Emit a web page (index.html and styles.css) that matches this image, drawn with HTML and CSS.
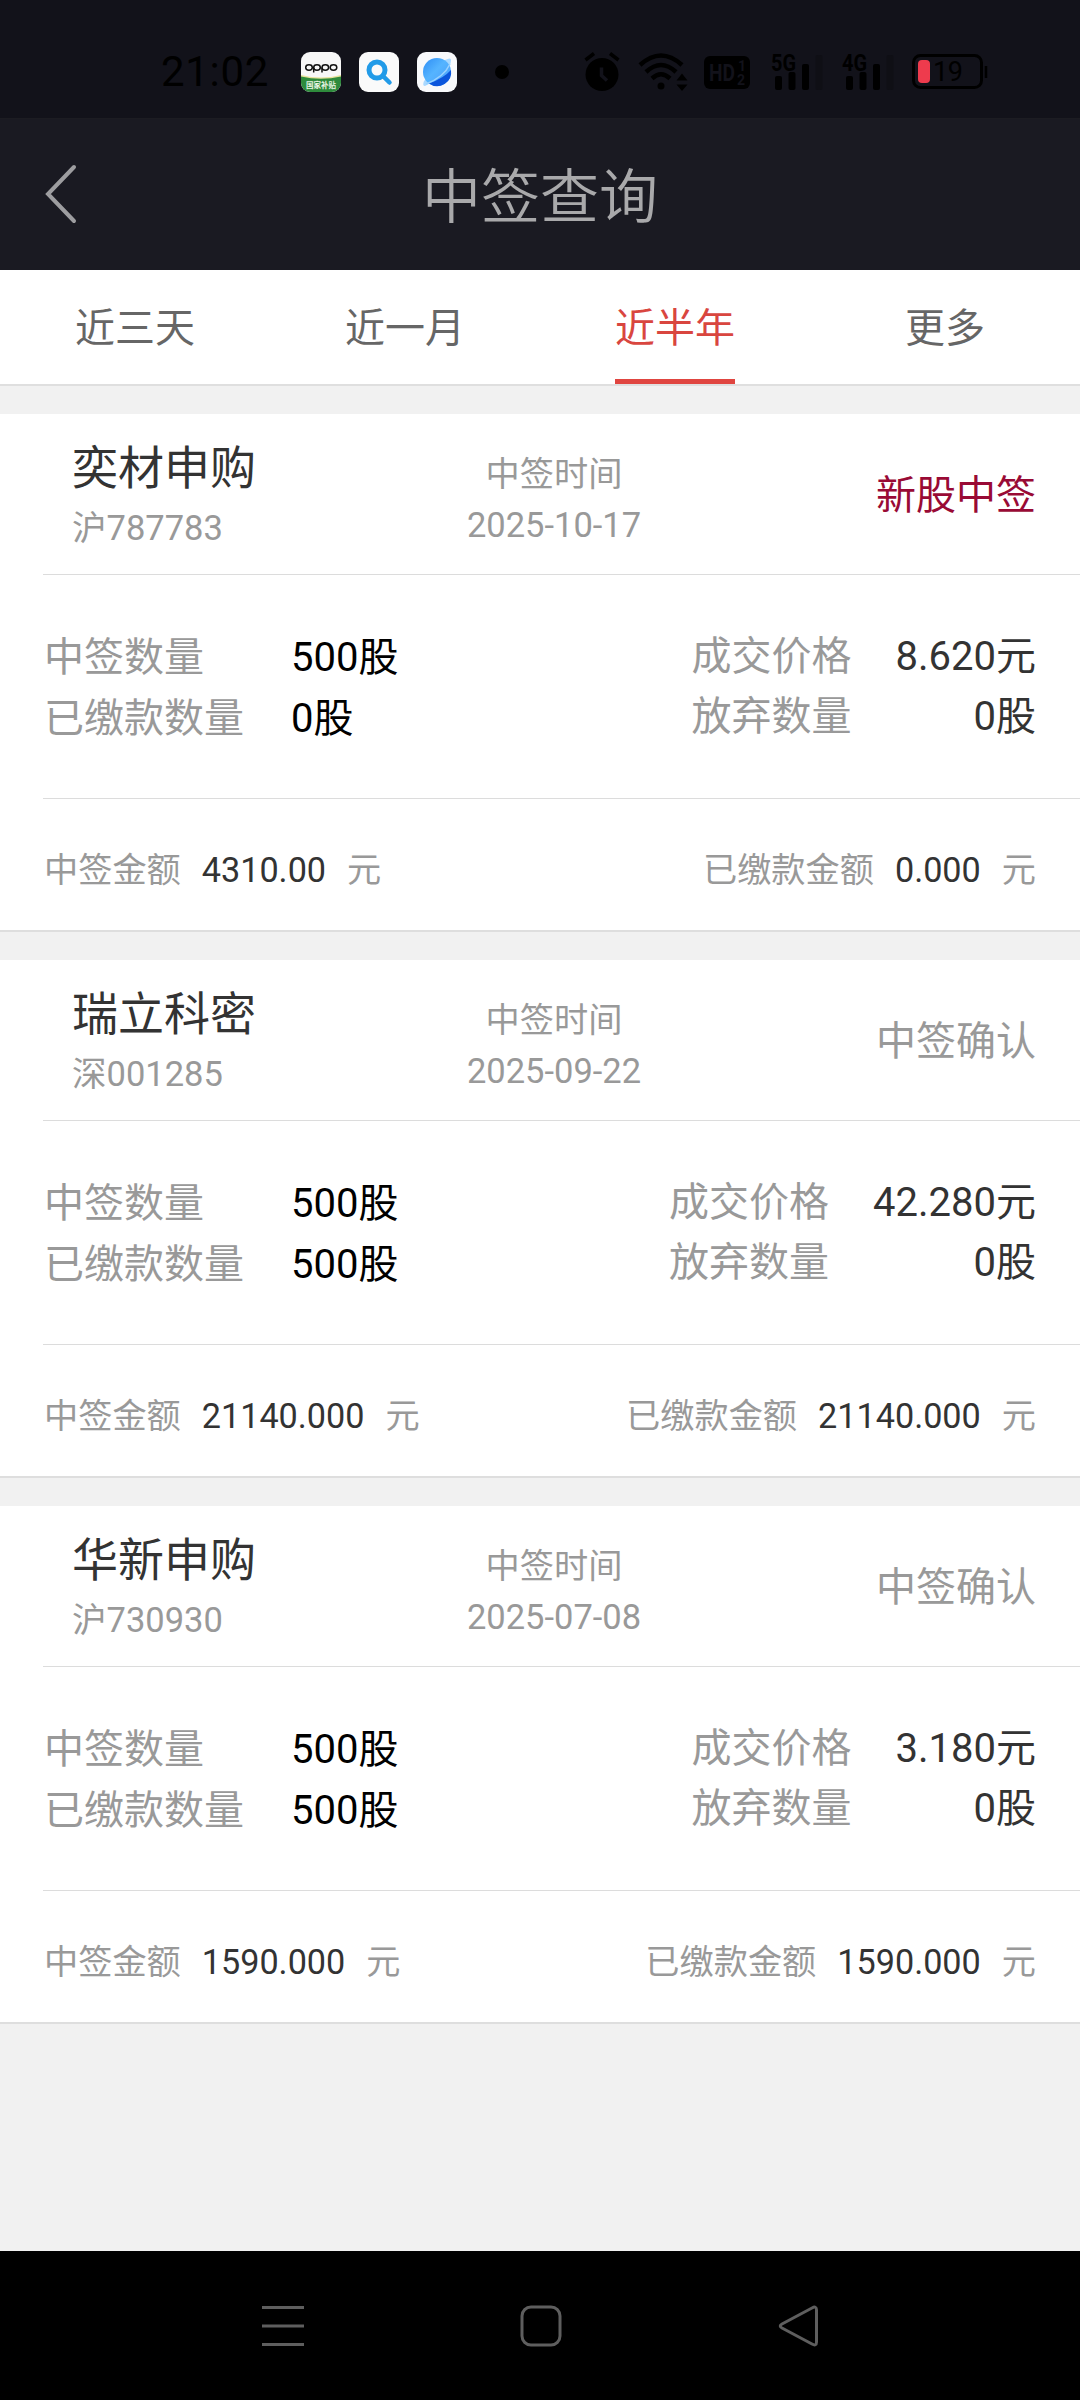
FILE: index.html
```html
<!DOCTYPE html>
<html lang="zh-CN">
<head>
<meta charset="utf-8">
<title>中签查询</title>
<link rel="stylesheet" href="styles.css">
</head>
<body>
<div class="statusbar">
  <span class="clock">21:02</span>
  <svg class="app" viewBox="0 0 40 40" width="40" height="40">
    <defs>
      <clipPath id="tile"><rect width="40" height="40" rx="9"/></clipPath>
      <linearGradient id="globe" x1="0" y1="0" x2="1" y2="1"><stop offset="0" stop-color="#2d8df5"/><stop offset=".45" stop-color="#55b4ff"/><stop offset="1" stop-color="#4a9cf8"/></linearGradient>
    </defs>
    <g clip-path="url(#tile)">
      <rect width="40" height="40" fill="#f7f7f7"/>
      <path d="M0 23Q20 28 40 23V27H0z" fill="#e8e29a"/>
      <path d="M0 24.500Q20 29 40 24.500V40H0z" fill="#2e8b3c"/>
    </g>
    <g fill="none" stroke="#111" stroke-width="1.500">
      <ellipse cx="8" cy="15.500" rx="3.300" ry="2.700"/><ellipse cx="16" cy="15.500" rx="3.300" ry="2.700"/><ellipse cx="24.300" cy="15.500" rx="3.300" ry="2.700"/><ellipse cx="32.500" cy="15.500" rx="3.300" ry="2.700"/>
      <path d="M12.700 15.500v5M21 15.500v5"/>
    </g>
    <text class="badge-text" x="20" y="36" text-anchor="middle" textLength="30">国家补贴</text>
  </svg>
  <svg class="app" viewBox="0 0 40 40" width="40" height="40">
    <rect width="40" height="40" rx="9" fill="#fafafa"/>
    <circle cx="18" cy="18" r="8" fill="none" stroke="#229be8" stroke-width="5"/>
    <path d="M24.500 24.500L30.500 30.500" stroke="#229be8" stroke-width="4.500" stroke-linecap="round"/>
  </svg>
  <svg class="app" viewBox="0 0 40 40" width="40" height="40">
    <rect width="40" height="40" rx="9" fill="#f8f9fb"/>
    <path d="M28 8Q34 5 34 8Q34 21 8 34Q5 34 7 29z" fill="#a9d8ff"/>
    <circle cx="20" cy="20" r="14" fill="url(#globe)"/>
    <path d="M34 18A14 14 0 0 1 12 31.500Q27 26 34 18z" fill="#0b55dc"/>
    <path d="M33 12Q27 25 9 32" fill="none" stroke="#9bd3ff" stroke-width="1.500"/>
  </svg>
  <span class="dot"></span>
  <svg class="alarm" viewBox="0 0 36 40" width="36" height="40">
    <circle cx="18" cy="22.500" r="16.500"/>
    <path d="M1.500 8L10 1.500M34.500 8L26 1.500" stroke="#000" stroke-width="3.500"/>
    <path d="M17.500 15.500v8l5.500 5" fill="none" stroke="#12121a" stroke-width="3.500"/>
  </svg>
  <svg class="wifi" viewBox="0 0 50 40" width="50" height="40">
    <g fill="none" stroke="#000" stroke-width="4.500">
      <path d="M2 13Q23 -6 44 13M8 20Q23 6 38 20M14 26.500Q23 18 32 26.500"/>
    </g>
    <circle cx="23" cy="34" r="3.500"/>
    <path d="M38.500 28.500l5.500-7 5.500 7zM38.500 32.500l5.500 6.500 5.500-6.500z"/>
  </svg>
  <svg class="hd" viewBox="0 0 46 33" width="46" height="33">
    <rect width="46" height="33" rx="6"/>
    <g class="hd-text"><text x="5" y="25" font-size="24" textLength="26" lengthAdjust="spacingAndGlyphs">HD</text><text x="34" y="15" font-size="14">1</text><text x="33" y="28.500" font-size="14">2</text></g>
  </svg>
  <svg class="signal" viewBox="0 0 53 40" width="53" height="40">
    <text class="net" x="0" y="18.500" textLength="25" lengthAdjust="spacingAndGlyphs">5G</text>
    <rect x="4" y="24" width="7" height="14" rx="2"/><rect x="17.500" y="20" width="7" height="18" rx="2"/><rect x="31" y="12" width="7" height="26" rx="2"/><rect x="44.500" y="3" width="7" height="35" rx="2" fill="#0f0f15"/>
  </svg>
  <svg class="signal second" viewBox="0 0 53 40" width="53" height="40">
    <text class="net" x="0" y="18.500" textLength="25" lengthAdjust="spacingAndGlyphs">4G</text>
    <rect x="4" y="24" width="7" height="14" rx="2"/><rect x="17.500" y="20" width="7" height="18" rx="2"/><rect x="31" y="12" width="7" height="26" rx="2"/><rect x="44.500" y="3" width="7" height="35" rx="2" fill="#0f0f15"/>
  </svg>
  <svg class="battery" viewBox="0 0 76 36" width="76" height="36">
    <rect x="1.500" y="1.500" width="68" height="32" rx="7" fill="none" stroke="#000" stroke-width="3"/>
    <rect x="6" y="6" width="12" height="23" rx="4" fill="#ee3b4d"/>
    <path d="M74 12v12" stroke="#000" stroke-width="2.500"/>
    <text x="21" y="27" font-size="27" textLength="30">19</text>
  </svg>
</div>

<header class="titlebar">
  <svg class="back" viewBox="0 0 32 58" width="32" height="58"><path d="M29 2L3 29L29 56" fill="none" stroke="#9d9da0" stroke-width="4" stroke-linecap="round"/></svg>
  <h1 class="title">中签查询</h1>
</header>

<nav class="tabs">
  <div class="tab"><span class="tab-label">近三天</span></div>
  <div class="tab"><span class="tab-label">近一月</span></div>
  <div class="tab"><span class="tab-label active">近半年</span></div>
  <div class="tab"><span class="tab-label">更多</span></div>
</nav>

<main class="list">
  <section class="card">
    <div class="card-head">
      <div class="stock"><div class="name">奕材申购</div><div class="code">沪787783</div></div>
      <div class="when"><div class="when-label">中签时间</div><div class="date">2025-10-17</div></div>
      <div class="state new">新股中签</div>
    </div>
    <div class="card-body">
      <div class="pairs"><span class="label">中签数量</span><span class="strong">500股</span><span class="label">已缴款数量</span><span class="strong">0股</span></div>
      <div class="pairs right"><span class="label">成交价格</span><span class="value">8.620元</span><span class="label">放弃数量</span><span class="value">0股</span></div>
    </div>
    <div class="card-foot">
      <div class="sum"><span>中签金额</span><span class="amount">4310.00</span><span>元</span></div>
      <div class="sum"><span>已缴款金额</span><span class="amount">0.000</span><span>元</span></div>
    </div>
  </section>
  <section class="card">
    <div class="card-head">
      <div class="stock"><div class="name">瑞立科密</div><div class="code">深001285</div></div>
      <div class="when"><div class="when-label">中签时间</div><div class="date">2025-09-22</div></div>
      <div class="state">中签确认</div>
    </div>
    <div class="card-body">
      <div class="pairs"><span class="label">中签数量</span><span class="strong">500股</span><span class="label">已缴款数量</span><span class="strong">500股</span></div>
      <div class="pairs right"><span class="label">成交价格</span><span class="value">42.280元</span><span class="label">放弃数量</span><span class="value">0股</span></div>
    </div>
    <div class="card-foot">
      <div class="sum"><span>中签金额</span><span class="amount">21140.000</span><span>元</span></div>
      <div class="sum"><span>已缴款金额</span><span class="amount">21140.000</span><span>元</span></div>
    </div>
  </section>
  <section class="card">
    <div class="card-head">
      <div class="stock"><div class="name">华新申购</div><div class="code">沪730930</div></div>
      <div class="when"><div class="when-label">中签时间</div><div class="date">2025-07-08</div></div>
      <div class="state">中签确认</div>
    </div>
    <div class="card-body">
      <div class="pairs"><span class="label">中签数量</span><span class="strong">500股</span><span class="label">已缴款数量</span><span class="strong">500股</span></div>
      <div class="pairs right"><span class="label">成交价格</span><span class="value">3.180元</span><span class="label">放弃数量</span><span class="value">0股</span></div>
    </div>
    <div class="card-foot">
      <div class="sum"><span>中签金额</span><span class="amount">1590.000</span><span>元</span></div>
      <div class="sum"><span>已缴款金额</span><span class="amount">1590.000</span><span>元</span></div>
    </div>
  </section>
</main>

<footer class="navbar">
  <svg viewBox="0 0 42 42" width="42" height="42"><path d="M0 2.500H42M0 21H42M0 39.500H42" stroke="#5e5e5e" stroke-width="3"/></svg>
  <svg viewBox="0 0 42 42" width="42" height="42"><rect x="2" y="2" width="38" height="38" rx="9" fill="none" stroke="#5e5e5e" stroke-width="3"/></svg>
  <svg viewBox="0 0 42 42" width="42" height="42"><path d="M34 3Q38.500 0.500 38.500 5V37Q38.500 41.500 34 39L4 23Q0.500 21 4 19z" fill="none" stroke="#5e5e5e" stroke-width="3"/></svg>
</footer>
</body>
</html>
```
FILE: styles.css
```css
* { box-sizing: border-box; }
body {
  margin: 0;
  width: 1080px;
  height: 2400px;
  display: flex;
  flex-direction: column;
  background: #f1f1f1;
  font-family: Roboto, "Noto Sans CJK SC", sans-serif;
  color: #333;
  overflow: hidden;
}
svg { display: block; flex: none; overflow: visible; }

.statusbar {
  height: 119px;
  padding: 26px 0 0 161px;
  display: flex;
  align-items: center;
  background: #12121a;
  border-bottom: 1px solid #1c1c22;
}
.clock { width: 140px; font-size: 42px; line-height: 50px; letter-spacing: 0.7px; color: #000; }
.app { margin-right: 18px; }
.badge-text { font-size: 7.500px; font-weight: 700; fill: #e9f5e4; }
.dot { width: 14px; height: 14px; margin: 0 75px 0 20px; border-radius: 50%; background: #000; }
.wifi { margin-left: 18px; }
.hd { margin-left: 16px; }
.hd-text { fill: #12121a; font-weight: 700; }
.signal { margin-left: 21px; }
.signal.second { margin-left: 18px; }
.net { font-size: 23px; font-weight: 700; }
.battery { margin-left: 17px; }

.titlebar {
  height: 151px;
  padding: 0 45px;
  display: grid;
  grid-template-columns: 1fr auto 1fr;
  align-items: center;
  background: #1a1a22;
}
.back { margin-bottom: 2px; }
.title { margin: 6px 0 0; font-size: 59px; line-height: 70px; font-weight: 350; color: #a9a9ab; }

.tabs {
  height: 116px;
  display: grid;
  grid-template-columns: repeat(4, 1fr);
  background: #fff;
  border-bottom: 2px solid #dfdfdf;
}
.tab { display: flex; justify-content: center; }
.tab-label { font-size: 40px; line-height: 118px; height: 114px; color: #666; }
.tab-label.active { color: #d9463f; border-bottom: 5px solid #e04540; }

.list { flex: 1; padding-top: 28px; display: flex; flex-direction: column; gap: 28px; }
.card { height: 518px; background: #fff; border-bottom: 2px solid #dedede; }
.card-head {
  height: 160px;
  padding: 0 44px 0 72px;
  display: grid;
  grid-template-columns: 1fr auto 1fr;
}
.name { margin-top: 24px; font-size: 46px; line-height: 60px; }
.code { margin-top: 7px; font-size: 34.500px; line-height: 46px; color: #999; }
.when { text-align: center; color: #999; font-size: 34.200px; line-height: 52px; padding-top: 34px; }
.date { line-height: 50px; font-size: 34.500px; }
.state { text-align: right; font-size: 40px; line-height: 164px; color: #999; }
.state.new { color: #990a35; }
.card-body, .card-foot {
  margin-left: 43px;
  padding-right: 44px;
  padding-left: 1px;
  border-top: 1px solid #dcdcdc;
  display: flex;
  justify-content: space-between;
}
.card-body { height: 224px; padding-top: 52px; }
.pairs { display: grid; grid-template-columns: auto auto; column-gap: 47px; grid-auto-rows: 61px; font-size: 40px; line-height: 61px; }
.pairs.right { column-gap: 44px; grid-auto-rows: 60px; line-height: 60px; }
.right .value { text-align: right; }
.label { color: #999; }
.strong { color: #000; }
.card-foot { height: 132px; }
.sum { display: flex; gap: 21px; font-size: 34.200px; line-height: 143px; color: #999; }
.amount { color: #333; }

.navbar {
  height: 149px;
  padding: 0 260px 0 262px;
  display: flex;
  justify-content: space-between;
  align-items: center;
  background: #000;
}
```
